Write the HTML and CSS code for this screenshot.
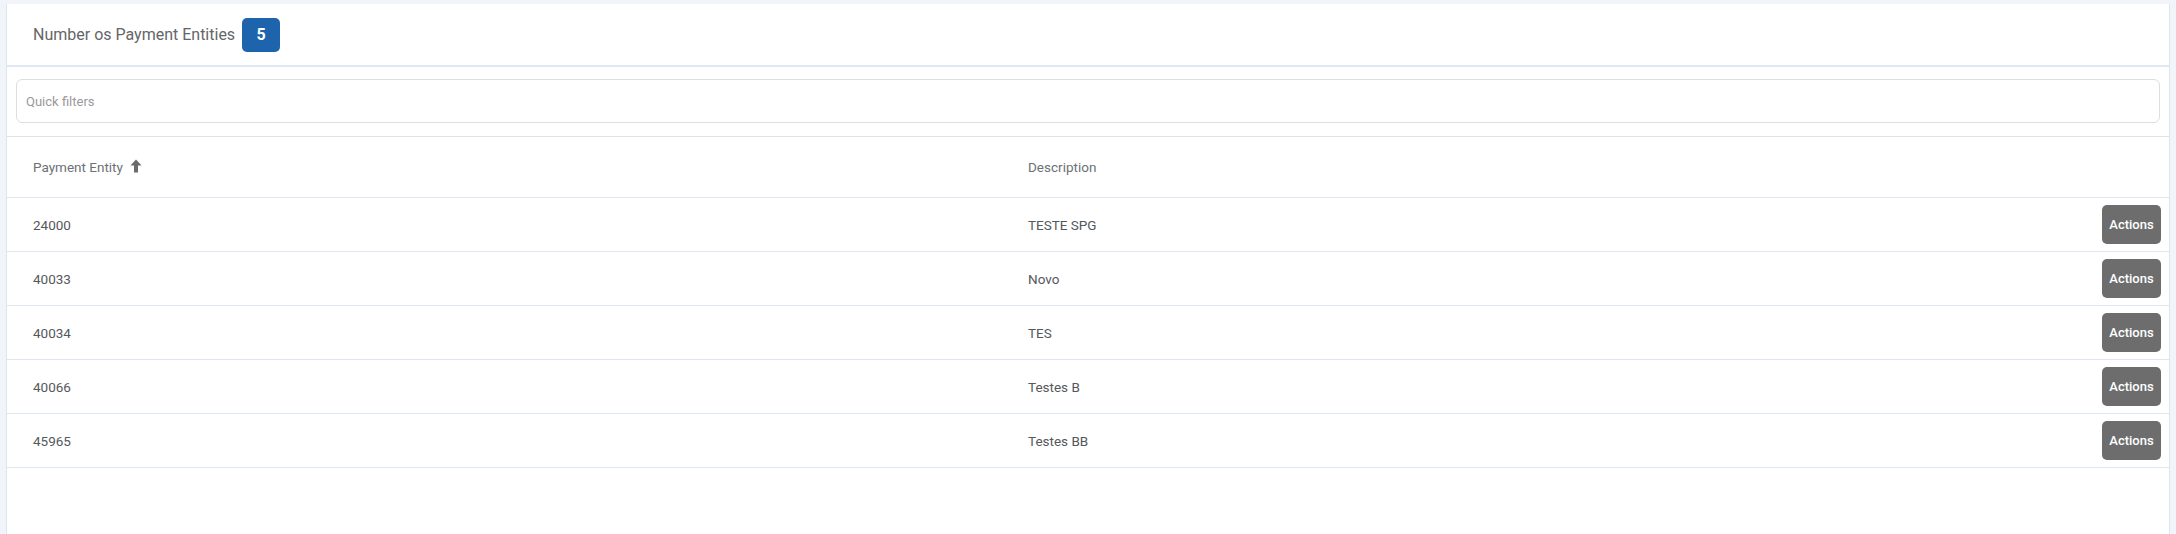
FILE: index.html
```html
<!DOCTYPE html>
<html>
<head>
<meta charset="utf-8">
<link rel="stylesheet" href="styles.css">
</head>
<body>
<div class="card">
  <div class="card-header">
    <span class="title">Number os Payment Entities</span>
    <span class="badge">5</span>
  </div>
  <div class="filters">
    <input class="quick" type="text" placeholder="Quick filters">
  </div>
  <div class="table">
    <div class="row head">
      <div class="cell">Payment Entity
        <svg class="sort" viewBox="0 0 12 14" width="12" height="14"><path d="M6 0.5 L11.5 6.5 L8 6.5 L8 13.5 L4 13.5 L4 6.5 L0.5 6.5 Z" fill="#6b6b6b"/></svg>
      </div>
      <div class="cell">Description</div>
      <div class="cell"></div>
    </div>
    <div class="row">
      <div class="cell">24000</div>
      <div class="cell">TESTE SPG</div>
      <div class="cell"><button class="btn">Actions</button></div>
    </div>
    <div class="row">
      <div class="cell">40033</div>
      <div class="cell">Novo</div>
      <div class="cell"><button class="btn">Actions</button></div>
    </div>
    <div class="row">
      <div class="cell">40034</div>
      <div class="cell">TES</div>
      <div class="cell"><button class="btn">Actions</button></div>
    </div>
    <div class="row">
      <div class="cell">40066</div>
      <div class="cell">Testes B</div>
      <div class="cell"><button class="btn">Actions</button></div>
    </div>
    <div class="row">
      <div class="cell">45965</div>
      <div class="cell">Testes BB</div>
      <div class="cell"><button class="btn">Actions</button></div>
    </div>
  </div>
</div>
</body>
</html>
```

FILE: styles.css
```css
* { box-sizing: border-box; }
html, body { height: 100%; }
body {
  margin: 0;
  padding: 4px 6px 0 6px;
  background: #f1f5fa;
  font-family: Roboto, "Liberation Sans", sans-serif;
  overflow: hidden;
}
.card {
  background: #fff;
  height: 100%;
  border-left: 1px solid #dce6f1;
  border-right: 1px solid #dce6f1;
}
.card-header {
  height: 63px;
  display: flex;
  align-items: center;
  padding-left: 26px;
  border-bottom: 2px solid #dfe8f2;
}
.title {
  font-size: 16px;
  color: #646668;
}
.badge {
  margin-left: 7px;
  width: 38px;
  height: 34px;
  border-radius: 5px;
  background: #1e64ad;
  color: #fff;
  font-weight: 700;
  font-size: 16px;
  display: flex;
  align-items: center;
  justify-content: center;
}
.filters {
  padding: 12px 9px 13px 9px;
  border-bottom: 1px solid #e2e2e2;
}
.quick {
  display: block;
  width: 100%;
  height: 44px;
  border: 1px solid #dedede;
  border-radius: 6px;
  padding: 0 9px;
  font-family: Roboto, "Liberation Sans", sans-serif;
  font-size: 13px;
  color: #333;
  outline: none;
}
.quick::placeholder { color: #9a9a9a; }
.row {
  display: grid;
  grid-template-columns: 995px 1fr auto;
  align-items: center;
  height: 54px;
  padding: 0 8px 0 26px;
  border-bottom: 1px solid #dfe8f2;
  font-size: 13.5px;
  color: #55585c;
}
.row.head {
  height: 61px;
  color: #6d7175;
  font-size: 13.5px;
}
.head .cell { display: flex; align-items: center; }
.sort { margin-left: 7px; margin-top: -2px; }
.btn {
  width: 59px;
  height: 39px;
  border: none;
  border-radius: 5px;
  background: #6d6d6d;
  color: #fff;
  font-family: Roboto, "Liberation Sans", sans-serif;
  font-weight: 500;
  font-size: 13px;
  padding: 0;
}
```
